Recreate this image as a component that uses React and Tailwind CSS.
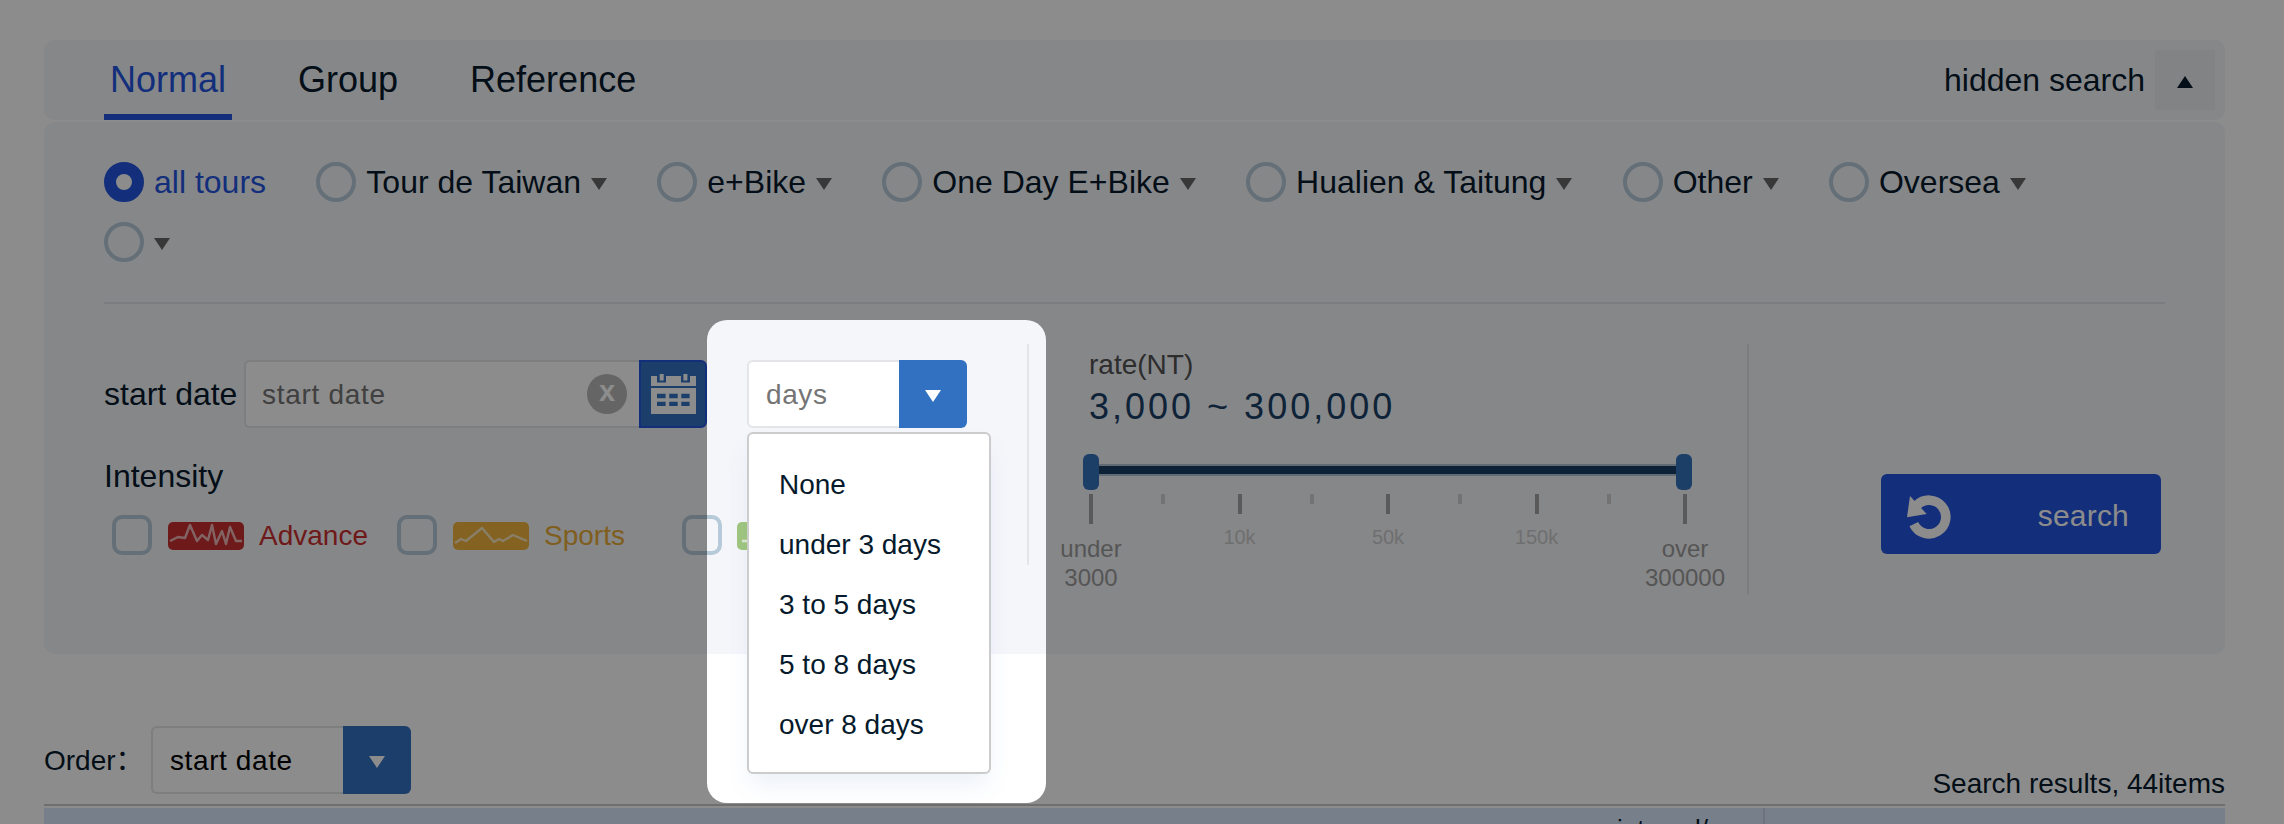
const TOURS = [
  { label: "Tour de Taiwan" },
  { label: "e+Bike" },
  { label: "One Day E+Bike" },
  { label: "Hualien & Taitung" },
  { label: "Other" },
  { label: "Oversea" },
  { label: "" },
];

const DAY_OPTIONS = ["None", "under 3 days", "3 to 5 days", "5 to 8 days", "over 8 days"];

const TICKS = [
  { size: "end", label: "under 3000" },
  { size: "small" },
  { size: "mid", label: "10k" },
  { size: "small" },
  { size: "mid", label: "50k" },
  { size: "small" },
  { size: "mid", label: "150k" },
  { size: "small" },
  { size: "end", label: "over 300000" },
];

const Triangle = ({ up = false, className = "" }) => (
  <svg width="16" height="12" viewBox="0 0 16 12" className={`shrink-0 ${className}`} fill="currentColor">
    <path d={up ? "M0 12H16L8 0Z" : "M0 0H16L8 12Z"} />
  </svg>
);

const Checkbox = () => (
  <span className="w-10 h-10 shrink-0 rounded-[10px] border-4 border-[#b7cada]" />
);

const Badge = ({ className, points }) => (
  <svg width="76" height="28" viewBox="0 0 76 28" className={`shrink-0 rounded-[5px] ${className}`}>
    <polyline points={points} fill="none" stroke="#fff" strokeOpacity="0.65" strokeWidth="2.4" strokeLinejoin="round" />
  </svg>
);

const CalendarIcon = () => (
  <svg width="45" height="40" viewBox="0 0 45 40" fill="#fff">
    <path d="M0 2H6V8.5H15V2H30V8.5H39V2H45V12H0Z" />
    <rect x="8.7" y="0" width="4" height="6.5" />
    <rect x="32.4" y="0" width="4" height="6.5" />
    <path
      fillRule="evenodd"
      d="M0 14H45V40H0ZM6 19.7V24.3H14.6V19.7ZM18.2 19.7V24.3H26.7V19.7ZM30.3 19.7V24.3H38.6V19.7ZM6 27.7V32H14.6V27.7ZM18.2 27.7V32H26.7V27.7ZM30.3 27.7V32H38.6V27.7Z"
    />
  </svg>
);

const ResetIcon = () => (
  <svg width="46" height="50" viewBox="0 -2 46 50">
    <path d="M7.8 33.1A16.8 16.8 0 1 0 11 14.2" fill="none" stroke="#fff" strokeWidth="9.6" />
    <path d="M4 5L20.7 23L1 26.3Z" fill="#fff" />
  </svg>
);

const Select = ({ value, className, textClass }) => (
  <div className={`h-[68px] flex shrink-0 ${className}`}>
    <div
      className={`flex-1 flex items-center bg-white border-2 border-r-0 border-[#e3e5e9] rounded-l-md pl-[17px] pt-[2px] text-[28px] tracking-[0.6px] ${textClass}`}
    >
      {value}
    </div>
    <div className="w-[68px] flex items-center justify-center bg-[#3271c2] text-white rounded-r-md pt-[3px]">
      <Triangle />
    </div>
  </div>
);

const Tabs = () => (
  <div className="h-20 flex justify-between bg-[#f5f6fa] rounded-[10px] pl-[60px] pr-[10px]">
    <div className="flex gap-[60px] text-[36px] leading-[69px]">
      <button className="px-[6px] pt-[5px] border-b-[6px] border-[#2454e0] text-[#2454e0]">Normal</button>
      <button className="px-[6px] pt-[5px] border-b-[6px] border-transparent">Group</button>
      <button className="px-[6px] pt-[5px] border-b-[6px] border-transparent">Reference</button>
    </div>
    <div className="flex items-center gap-[10px]">
      <span className="text-[32px]">hidden search</span>
      <span className="w-[60px] h-[60px] flex items-center justify-center bg-[#ebeef2] pt-[4px]">
        <Triangle up />
      </span>
    </div>
  </div>
);

const TourFilter = () => (
  <div className="flex flex-wrap gap-x-[50.3px] gap-y-5 text-[32px] leading-10 pr-16 pb-10 border-b-2 border-[#dfe2e7]">
    <label className="flex items-center gap-[10px] text-[#2454e0]">
      <span className="w-10 h-10 rounded-full border-[12px] border-[#2454e0] bg-white" />
      all tours
    </label>
    {TOURS.map((tour, i) => (
      <label key={i} className="flex items-center gap-[10px]">
        <span className="w-10 h-10 rounded-full border-4 border-[#b7cada]" />
        {tour.label && <span>{tour.label}</span>}
        <Triangle className="text-[#666] mt-1" />
      </label>
    ))}
  </div>
);

const DateAndIntensity = () => (
  <div className="w-[603px] shrink-0 pt-4">
    <div className="flex items-center">
      <span className="w-[140px] text-[32px] whitespace-nowrap">start date</span>
      <div className="w-[395px] h-[68px] flex items-center justify-between bg-white border-2 border-r-0 border-[#e3e5e9] rounded-l-md pl-[16px] pr-3">
        <span className="pt-[2px] text-[28px] tracking-[0.7px] text-[#757575]">start date</span>
        <span className="w-10 h-10 rounded-full bg-[#b8b8b8] text-white text-[29px] leading-[34px] font-bold text-center">
          x
        </span>
      </div>
      <div className="w-[68px] h-[68px] flex items-center justify-center bg-[#3271c2] border-2 border-[#2454e0] rounded-r-md">
        <CalendarIcon />
      </div>
    </div>
    <div className="mt-[28px] text-[32px] leading-10">Intensity</div>
    <div className="mt-[18px] ml-2 flex text-[28px] leading-10">
      <label className="w-[285px] shrink-0 flex items-center">
        <Checkbox />
        <Badge
          className="ml-4 mt-[2px] bg-[#ca3130]"
          points="2,19 10,15 17,16 22,3 29,19 34,13 40,18 44,3 48,22 54,9 58,22 62,5 68,19 74,19"
        />
        <span className="ml-[15px] pt-[2px] text-[#ca3130]">Advance</span>
      </label>
      <label className="w-[285px] shrink-0 flex items-center">
        <Checkbox />
        <Badge
          className="ml-4 mt-[2px] bg-[#f0b53f]"
          points="2,21 8,17 13,19 29,6 41,20 46,17 50,19 60,13 74,19"
        />
        <span className="ml-[15px] pt-[2px] text-[#e8ab38]">Sports</span>
      </label>
      <label className="w-[285px] shrink-0 flex items-center">
        <Checkbox />
        <Badge className="ml-[15px] mt-[2px] bg-[#a0c67e]" points="5,19 20,19 32,12 44,18 60,15 74,19" />
      </label>
    </div>
  </div>
);

const DaysFilter = () => (
  <div className="relative z-10 w-[282px] h-[221px] shrink-0 ml-10 pt-4 border-r-2 border-[#e3e5e9]">
    <Select value="days" className="w-[220px]" textClass="text-[#757575]" />
    <ul className="absolute left-0 top-[88px] w-[244px] h-[342px] pt-[21px] pl-[30px] bg-white border-2 border-[#ccc] rounded-md text-[28px] leading-[60px] shadow-[0_14px_26px_-4px_rgba(50,113,194,0.1)]">
      {DAY_OPTIONS.map((option) => (
        <li key={option} className="whitespace-nowrap">
          {option}
        </li>
      ))}
    </ul>
  </div>
);

const tickClass = {
  end: "w-1 h-[30px] bg-[#a5a5a5]",
  mid: "w-1 h-5 bg-[#a5a5a5]",
  small: "w-1 h-[10px] mr-[4px] bg-[#d1d1d1]",
};

const RateSlider = () => (
  <div className="w-[720px] h-[250px] shrink-0 pl-[20px] pt-[3px] border-r-2 border-[#e0e3e8]">
    <div className="ml-10 text-[28px] leading-[36px] text-[#525252]">rate(NT)</div>
    <div className="ml-10 text-[36px] leading-[40px] mt-[4px] tracking-[3px] text-[#1b4166]">
      3,000 ~ 300,000
    </div>
    <div className="mt-[27px] ml-[34px] w-[609px] h-9 flex items-center">
      <span className="w-4 h-9 rounded-md bg-[#3374bd]" />
      <span className="flex-1 h-3 -mt-[4px] border-y-2 border-[#b0c4d6] bg-[#183e63]" />
      <span className="w-4 h-9 rounded-md bg-[#3374bd]" />
    </div>
    <div className="mt-1 ml-[5px] w-[668px] flex justify-between">
      {TICKS.map((tick, i) => (
        <div key={i} className="w-[74px] flex flex-col items-center">
          <span className={tickClass[tick.size]} />
          {tick.size === "mid" && (
            <span className="mt-[9px] text-[20px] leading-7 text-[#cbcbcb]">{tick.label}</span>
          )}
          {tick.size === "end" && (
            <span className="mt-[10px] text-[24px] leading-[29px] text-center text-[#9c9c9c]">{tick.label}</span>
          )}
        </div>
      ))}
    </div>
  </div>
);

const SearchPanel = () => (
  <div className="mt-[2px] h-[532px] bg-[#f5f6fa] rounded-[10px] pt-10 px-[60px]">
    <TourFilter />
    <div className="pt-10 flex">
      <DateAndIntensity />
      <DaysFilter />
      <RateSlider />
      <button className="mt-[130px] ml-auto mr-[4px] w-[280px] h-20 shrink-0 flex items-center justify-between rounded-md bg-[#2454e0] pl-[25px] pr-[32px] text-white text-[30px] tracking-[0.2px]">
        <ResetIcon />
        <span className="pt-[2px]">search</span>
      </button>
    </div>
  </div>
);

const App = () => {
  return (
    <div className="relative w-[2284px] h-[824px] overflow-hidden bg-white pt-10 pl-[44px] pr-[59px] text-[#061a2c] font-['Liberation_Sans','Noto_Sans_CJK_SC',sans-serif]">
      <Tabs />
      <SearchPanel />

      {/* Results toolbar */}
      <div className="mt-[72px] h-[80px] flex justify-between border-b-2 border-[#cacaca] text-[28px]">
        <div className="h-[68px] flex items-center">
          <span lang="zh-CN" className="w-[107px] pt-[2px] whitespace-nowrap">
            Order：
          </span>
          <Select value="start date" className="w-[260px]" textClass="text-black" />
        </div>
        <span className="self-end leading-[40px]">Search results, 44items</span>
      </div>

      {/* Results table head */}
      <div className="mt-[2px] h-[60px] flex bg-[#d9e8fd] text-[26px] leading-7">
        <div className="w-[1721px] shrink-0 border-r-2 border-[#c6d4ea] pt-[7px] pl-[1573px]">interval/</div>
      </div>

      {/* Spotlight around the days menu */}
      <div className="absolute z-20 left-[707px] top-[320px] w-[339px] h-[483px] rounded-[20px] shadow-[0_0_0_2400px_rgba(0,0,0,0.45)] pointer-events-none" />
    </div>
  );
};

export default App;
